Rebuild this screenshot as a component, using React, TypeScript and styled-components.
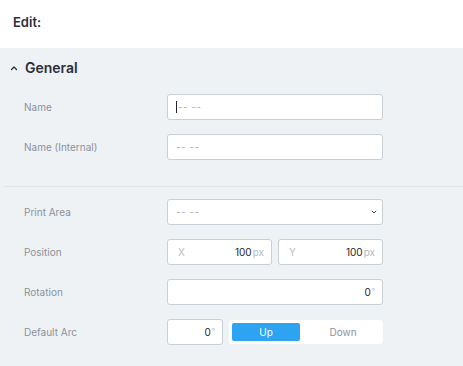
import { createGlobalStyle } from "styled-components";
import styled from "styled-components";

const GlobalStyle = createGlobalStyle`
  html, body {
    margin: 0;
    padding: 0;
    background: #ffffff;
    font-family: Inter, "Noto Sans", sans-serif;
  }
`;

const Page = styled.div`
  width: 463px;
  height: 366px;
  display: flex;
  flex-direction: column;
  overflow: hidden;
`;

const Header = styled.div`
  height: 48px;
  display: flex;
  align-items: center;
  padding-left: 13px;
  padding-bottom: 4px;
  box-sizing: border-box;
  font-size: 13px;
  font-weight: 600;
  color: #2b2f3a;
  background: #ffffff;
`;

const Panel = styled.div`
  flex: 1;
  background: #eff2f5;
`;

const SectionTitle = styled.div`
  height: 39px;
  display: flex;
  align-items: center;
  gap: 7px;
  padding-left: 10px;
  font-size: 14px;
  font-weight: 600;
  color: #2b2f3a;
`;

const Group = styled.div`
  display: flex;
  flex-direction: column;
`;

const Divider = styled.div`
  height: 1px;
  margin: 19px 0 5px 4px;
  background: #e1e5ea;
`;

const Row = styled.div`
  height: 40px;
  display: flex;
  align-items: center;
`;

const Label = styled.div`
  width: 143px;
  padding-left: 24px;
  font-size: 10px;
  color: #8b919b;
`;

const Controls = styled.div`
  width: 216px;
  display: flex;
  gap: 6px;
`;

const Field = styled.div<{ width?: number }>`
  position: relative;
  box-sizing: border-box;
  height: 26px;
  ${({ width }) => (width ? `width: ${width}px;` : "flex: 1;")}
  display: flex;
  align-items: center;
  padding: 0 7px 0 8px;
  background: #ffffff;
  border: 1px solid #c9cfd7;
  border-radius: 3px;
  font-size: 10px;
`;

const Placeholder = styled.span`
  color: #a9aeb6;
  letter-spacing: 0.5px;
  flex: 1;
`;

const Caret = styled.span`
  width: 1px;
  height: 12px;
  margin-right: 1px;
  background: #1f2430;
`;

const Prefix = styled.span`
  flex: 1;
  padding-left: 2px;
  color: #b9bec5;
`;

const Value = styled.span`
  color: #1f2430;
  margin-left: auto;
`;

const Unit = styled.span<{ small?: boolean }>`
  color: #b3b8c0;
  font-size: ${({ small }) => (small ? "7px" : "10px")};
  align-self: ${({ small }) => (small ? "flex-start" : "auto")};
  margin-top: ${({ small }) => (small ? "7px" : "0")};
  margin-left: 1px;
`;

const Toggle = styled.div`
  flex: 1;
  height: 24px;
  margin-top: 1px;
  box-sizing: border-box;
  display: flex;
  gap: 6px;
  padding: 3px;
  background: #ffffff;
  border-radius: 3px;
`;

const ToggleButton = styled.div<{ active?: boolean }>`
  ${({ active }) => (active ? "width: 68px;" : "flex: 1;")}
  display: flex;
  align-items: center;
  justify-content: center;
  border-radius: 2px;
  font-size: 10px;
  background: ${({ active }) => (active ? "#2ea3f2" : "transparent")};
  color: ${({ active }) => (active ? "#ffffff" : "#8b919b")};
`;

const SelectArrow = styled.span`
  display: flex;
  margin-right: -2px;
`;

const Chevron = ({ up, size = 8 }: { up?: boolean; size?: number }) => (
  <svg width={size} height={size} viewBox="0 0 8 8" fill="none">
    <path
      d={up ? "M1.5 5.5L4 3L6.5 5.5" : "M1.5 2.8L4 5.3L6.5 2.8"}
      stroke="#2b2f3a"
      strokeWidth="1.3"
      strokeLinecap="round"
      strokeLinejoin="round"
    />
  </svg>
);

export default function App() {
  return (
    <Page>
      <GlobalStyle />
      <Header>Edit:</Header>
      <Panel>
        <SectionTitle>
          <Chevron up />
          General
        </SectionTitle>
        <Group>
          <Row>
            <Label>Name</Label>
            <Controls>
              <Field>
                <Caret />
                <Placeholder>-- --</Placeholder>
              </Field>
            </Controls>
          </Row>
          <Row>
            <Label>Name (Internal)</Label>
            <Controls>
              <Field>
                <Placeholder>-- --</Placeholder>
              </Field>
            </Controls>
          </Row>
        </Group>
        <Divider />
        <Group>
          <Row>
            <Label>Print Area</Label>
            <Controls>
              <Field>
                <Placeholder>-- --</Placeholder>
                <SelectArrow>
                  <Chevron size={6} />
                </SelectArrow>
              </Field>
            </Controls>
          </Row>
          <Row>
            <Label>Position</Label>
            <Controls>
              <Field>
                <Prefix>X</Prefix>
                <Value>100</Value>
                <Unit>px</Unit>
              </Field>
              <Field>
                <Prefix>Y</Prefix>
                <Value>100</Value>
                <Unit>px</Unit>
              </Field>
            </Controls>
          </Row>
          <Row>
            <Label>Rotation</Label>
            <Controls>
              <Field>
                <Value>0</Value>
                <Unit small>°</Unit>
              </Field>
            </Controls>
          </Row>
          <Row>
            <Label>Default Arc</Label>
            <Controls>
              <Field width={56}>
                <Value>0</Value>
                <Unit small>°</Unit>
              </Field>
              <Toggle>
                <ToggleButton active>Up</ToggleButton>
                <ToggleButton>Down</ToggleButton>
              </Toggle>
            </Controls>
          </Row>
        </Group>
      </Panel>
    </Page>
  );
}
